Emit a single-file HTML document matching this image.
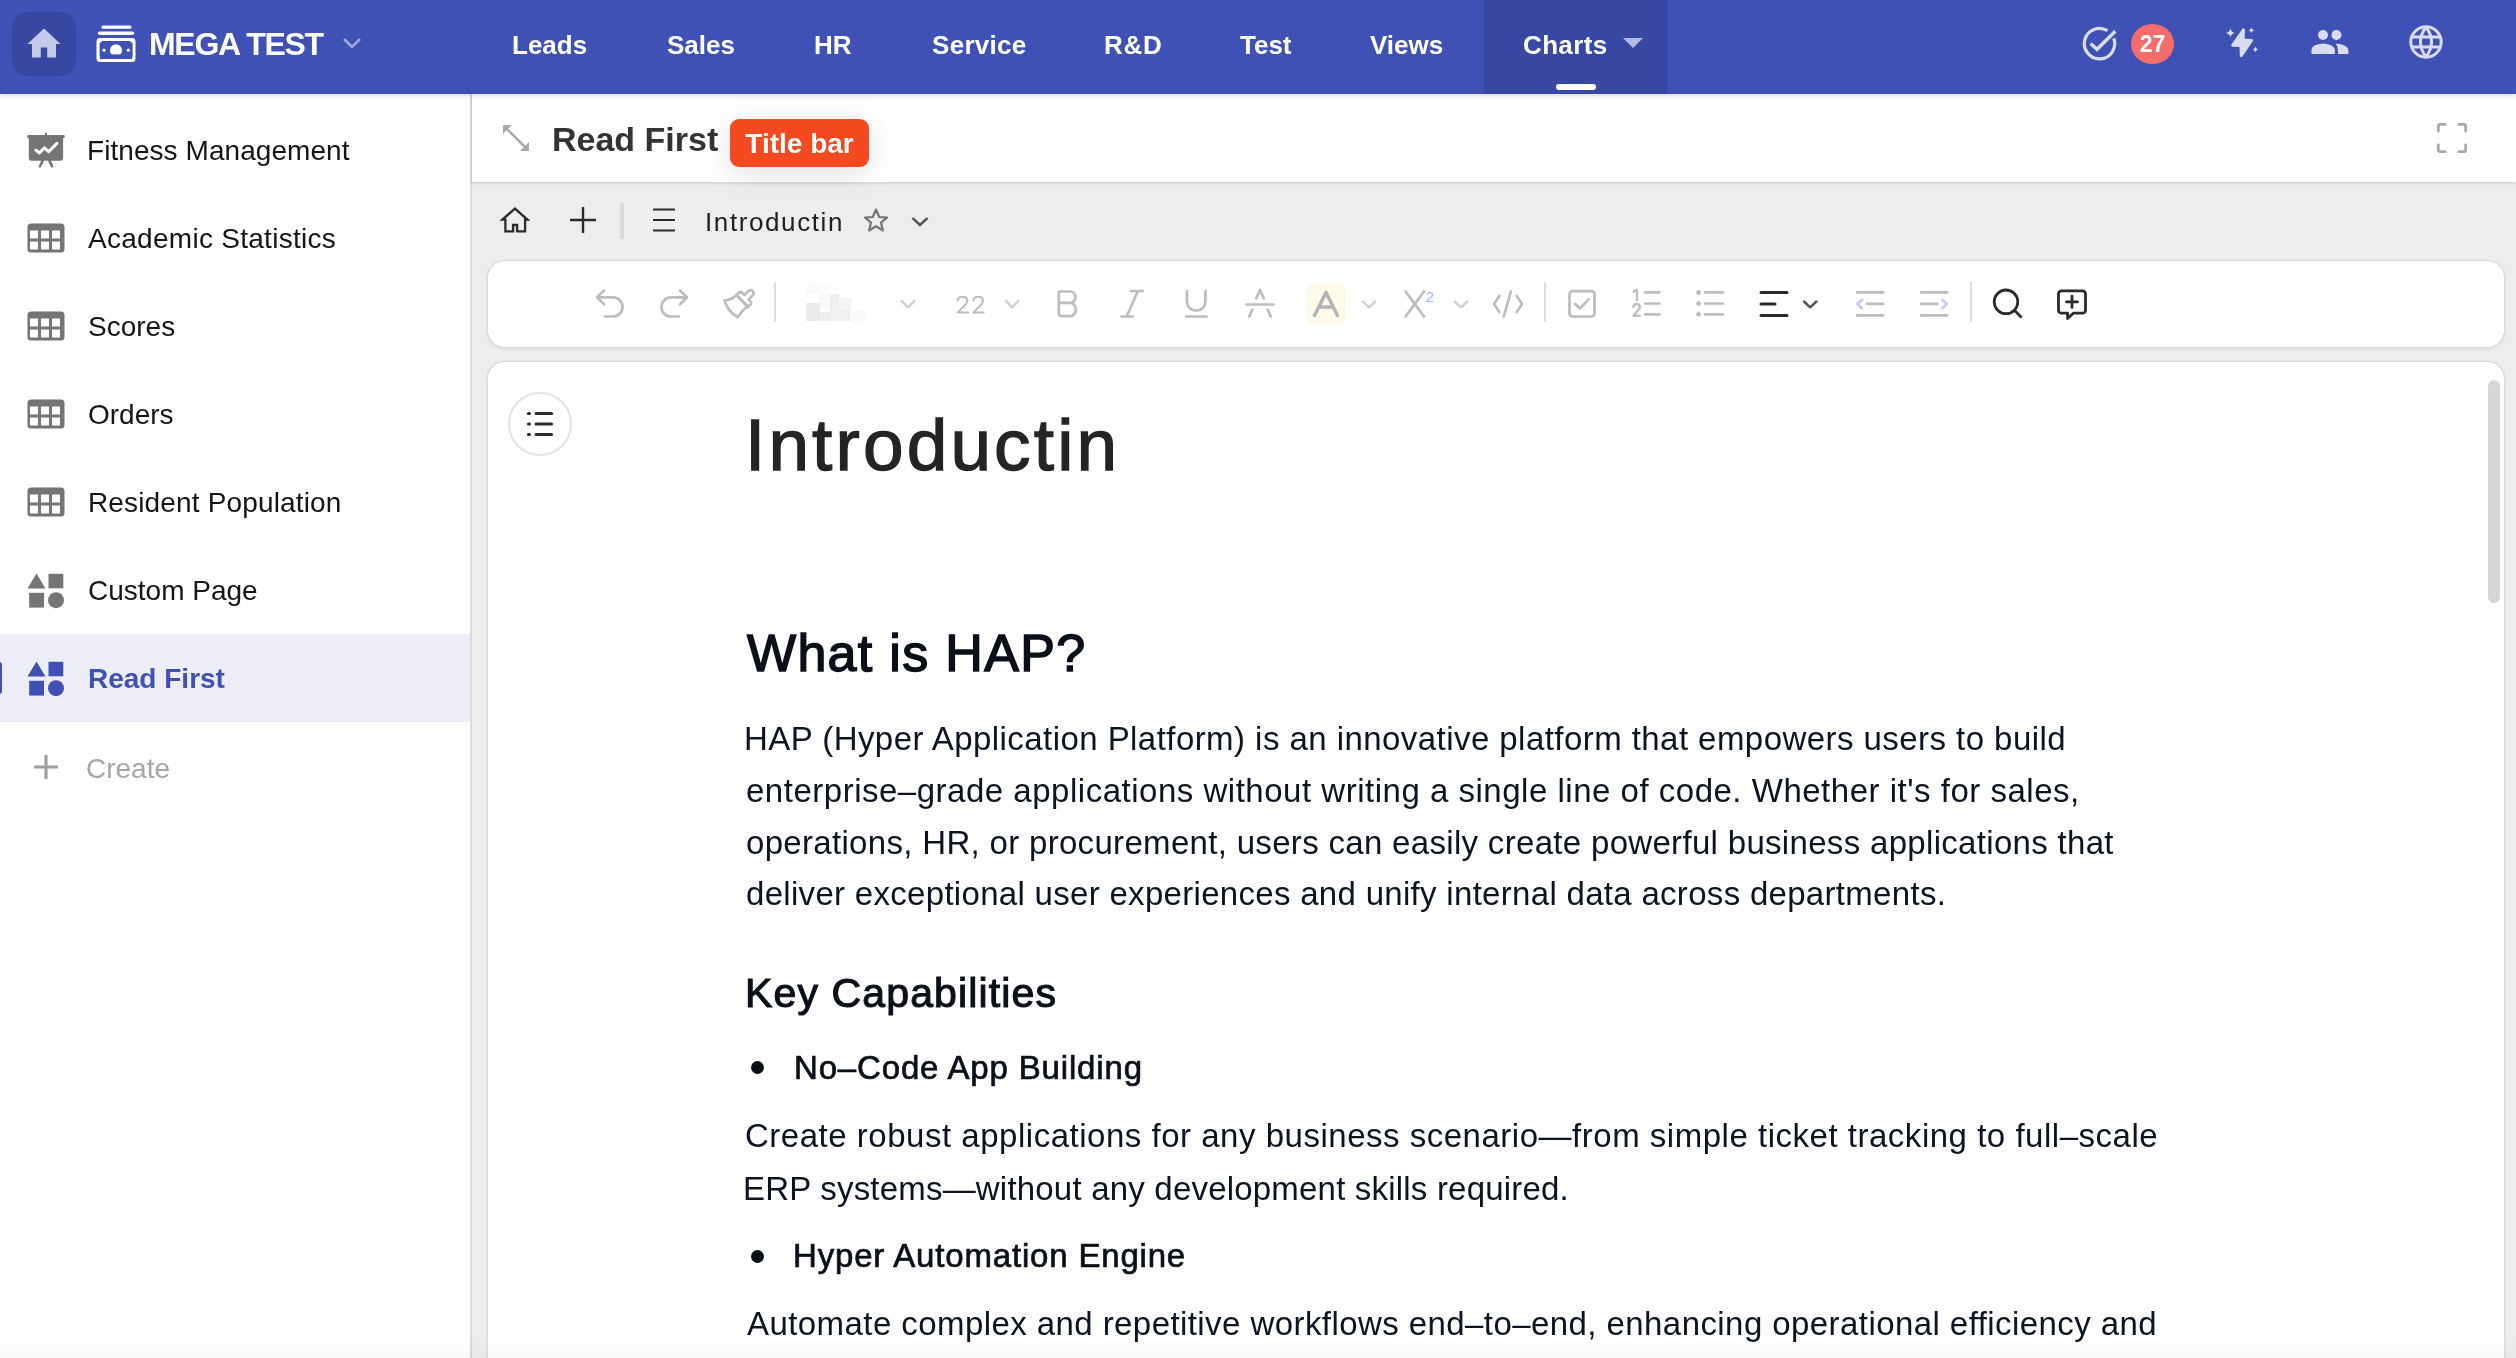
<!DOCTYPE html>
<html><head><meta charset="utf-8">
<style>
*{box-sizing:border-box;margin:0;padding:0}
html,body{width:2516px;height:1358px;overflow:hidden;background:#fff;font-family:"Liberation Sans",sans-serif}
.abs{position:absolute}
#hdr{position:absolute;left:0;top:0;width:2516px;height:94px;background:#3F51B5;z-index:5;box-shadow:0 1px 6px rgba(0,0,0,.2)}
.nav{will-change:transform;position:absolute;top:-2px;height:94px;color:#fff;font-weight:bold;font-size:26px;line-height:94px;white-space:nowrap}
#side{position:absolute;left:0;top:94px;width:470px;height:1264px;background:#fff}
#sideb{position:absolute;left:470px;top:94px;width:2px;height:1264px;background:#DCDCDC}
.si{position:absolute;left:0;width:470px;height:88px}
.si .t{will-change:transform;position:absolute;left:88px;top:1px;line-height:88px;font-size:28px;color:#151515;white-space:nowrap}
.si svg{position:absolute;left:26px;top:26px}
#main{position:absolute;left:472px;top:94px;width:2044px;height:1264px;background:#EDEDED}
#titlebar{position:absolute;left:472px;top:94px;width:2044px;height:88px;background:#fff;box-shadow:0 1px 3px rgba(0,0,0,.15);z-index:2}
#titlebar div,#row2 div,#hdr div{will-change:transform}
.ln{position:absolute;white-space:nowrap;-webkit-font-smoothing:antialiased;will-change:transform}
</style></head><body>
<div id="hdr">
  <div class="abs" style="left:12px;top:12px;width:64px;height:64px;border-radius:15px;background:rgba(0,0,0,.1)"></div>
  <svg class="abs" style="left:27px;top:28px" width="34" height="30" viewBox="0 0 34 30"><path d="M17 0.5 L33.5 16 L29 16 L29 29.5 L20.2 29.5 L20.2 19.5 L13.8 19.5 L13.8 29.5 L5 29.5 L5 16 L0.5 16 Z" fill="#C5CAE9"/></svg>
  <div class="abs" style="left:1484px;top:0;width:183px;height:94px;background:rgba(0,0,0,.1)"></div>

  <svg class="abs" style="left:96px;top:25px" width="40" height="38" viewBox="0 0 40 38">
    <rect x="5.5" y="0.5" width="30" height="3.3" rx="1.6" fill="#fff"/>
    <rect x="1.9" y="6.4" width="36.4" height="3.5" rx="1.7" fill="#fff"/>
    <path fill-rule="evenodd" fill="#fff" d="M4 13 H36 a3.5 3.5 0 0 1 3.5 3.5 V33.6 a3.5 3.5 0 0 1 -3.5 3.5 H4 a3.5 3.5 0 0 1 -3.5 -3.5 V16.5 a3.5 3.5 0 0 1 3.5 -3.5 Z M6.2 16 L3.6 18.4 V31.4 L6.2 34 H33.8 L36.6 31.4 V18.4 L33.8 16 Z"/>
    <circle cx="20" cy="25.2" r="6" fill="#fff"/>
    <rect x="4" y="29.4" width="32" height="4.6" fill="#3F51B5"/>
    <circle cx="8" cy="25.2" r="1.6" fill="#fff"/>
    <circle cx="32.3" cy="25.2" r="1.6" fill="#fff"/>
  </svg>
  <div class="nav" style="left:148.5px;top:-3px;font-size:32px;letter-spacing:-1.3px">MEGA TEST</div>
  <svg class="abs" style="left:342px;top:37px" width="20" height="13" viewBox="0 0 20 13"><path d="M2 2 L10 10 L18 2" fill="none" stroke="#9FA8DA" stroke-width="2.6"/></svg>
  <div class="nav" style="left:512px">Leads</div>
  <div class="nav" style="left:667px">Sales</div>
  <div class="nav" style="left:814px">HR</div>
  <div class="nav" style="left:931.5px;letter-spacing:0.3px">Service</div>
  <div class="nav" style="left:1103.5px;letter-spacing:0.7px">R&amp;D</div>
  <div class="nav" style="left:1240px">Test</div>
  <div class="nav" style="left:1370px">Views</div>
  <div class="nav" style="left:1523px;letter-spacing:0.35px">Charts</div>
  <svg class="abs" style="left:1622px;top:37px" width="22" height="12" viewBox="0 0 22 12"><path d="M1 1 H21 L11 11 Z" fill="#B3B9E0"/></svg>
  <div class="abs" style="left:1556px;top:84px;width:40px;height:6px;border-radius:3px;background:#fff"></div>
  <svg class="abs" style="left:2080px;top:25px" width="40" height="40" viewBox="0 0 40 40">
    <path d="M33.8 13.4 A15.2 15.2 0 1 1 27.5 5.7" fill="none" stroke="#D9DCF0" stroke-width="3.2"/>
    <path d="M10.6 18.6 L17 24.3 L35.3 6.2" fill="none" stroke="#D9DCF0" stroke-width="3.4"/>
  </svg>
  <div class="abs" style="left:2131px;top:24px;width:43px;height:40px;border-radius:50%;background:#F46D6D;color:#fff;font-weight:bold;font-size:23px;line-height:40px;text-align:center">27</div>
  <svg class="abs" style="left:2222px;top:24px" width="40" height="40" viewBox="0 0 40 40">
    <path d="M21.6 5.6 L10.6 21.4 L18.8 21.7 L19.3 31.8 L29.6 16.4 L21.2 15.8 Z" fill="#D9DCF0" stroke="#D9DCF0" stroke-width="2.8" stroke-linejoin="round"/>
    <path d="M8.4 4.2 Q8.964 8.336 13.100000000000001 8.9 Q8.964 9.464 8.4 13.600000000000001 Q7.836 9.464 3.7 8.9 Q7.836 8.336 8.4 4.2 Z" fill="#D9DCF0"/>
    <path d="M29.4 3.0 Q29.796 5.904 32.699999999999996 6.3 Q29.796 6.696 29.4 9.6 Q29.003999999999998 6.696 26.099999999999998 6.3 Q29.003999999999998 5.904 29.4 3.0 Z" fill="#D9DCF0"/>
    <path d="M33.4 22.2 Q33.796 25.104 36.699999999999996 25.5 Q33.796 25.896 33.4 28.8 Q33.004 25.896 30.099999999999998 25.5 Q33.004 25.104 33.4 22.2 Z" fill="#D9DCF0"/>
  </svg>
  <svg class="abs" style="left:2308px;top:26px" width="44" height="32" viewBox="0 0 44 32">
    <circle cx="15" cy="9" r="5" fill="#D9DCF0"/>
    <circle cx="28.5" cy="9" r="5" fill="#D9DCF0"/>
    <path d="M3.5 28 V24.5 Q3.5 18 15 17.5 Q26.5 18 26.9 24.5 V28 Z" fill="#D9DCF0"/>
    <path d="M30 28 V24.5 Q30 20 27.6 17.6 Q40 18.5 40.4 24.5 V28 Z" fill="#D9DCF0"/>
  </svg>
  <svg class="abs" style="left:2406px;top:22px" width="40" height="40" viewBox="0 0 40 40">
    <g fill="none" stroke="#D9DCF0" stroke-width="3">
      <circle cx="20" cy="20" r="15.2"/>
      <path d="M20 5 Q9 20 20 35 M20 5 Q31 20 20 35"/>
      <line x1="5" y1="15" x2="35" y2="15"/>
      <line x1="5" y1="25" x2="35" y2="25"/>
    </g>
  </svg>
</div>
<div id="side">
<div class="si" style="top:12px"><svg style="left:27px;top:20px" width="40" height="46" viewBox="0 0 40 46"><rect x="0.2" y="9.1" width="37.6" height="2.9" rx="1.3" fill="#757575"/><rect x="18" y="6.6" width="2" height="4" rx="0.8" fill="#757575"/><path d="M1.8 11 H36.1 V31.8 a3 3 0 0 1 -3 3 H4.8 a3 3 0 0 1 -3 -3 Z" fill="#757575"/><path d="M16 34 L13 40.3 M22.1 34 L25 40.3" stroke="#757575" stroke-width="2.6" stroke-linecap="round"/><path d="M8.9 24.2 L12.4 27 L17.5 21.9 L21.6 25.6 L30 17.4" fill="none" stroke="#fff" stroke-width="3" stroke-linecap="round" stroke-linejoin="round"/></svg><div class="t" style="left:87px;letter-spacing:0.06px">Fitness Management</div></div>
<div class="si" style="top:100px"><svg style="left:27px;top:29px" width="38" height="32" viewBox="0 0 38 32"><path fill-rule="evenodd" fill="#757575" d="M4 0.5 H34 a3.5 3.5 0 0 1 3.5 3.5 V26 a3.5 3.5 0 0 1 -3.5 3.5 H4 a3.5 3.5 0 0 1 -3.5 -3.5 V4 a3.5 3.5 0 0 1 3.5 -3.5 Z M3 7.5 V15.5 H11 V7.5 Z M14 7.5 V15.5 H22 V7.5 Z M25 7.5 V15.5 H33 V7.5 Z M3 18.5 V26.5 H11 V18.5 Z M14 18.5 V26.5 H22 V18.5 Z M25 18.5 V26.5 H33 V18.5 Z"/></svg><div class="t" style="letter-spacing:0.28px">Academic Statistics</div></div>
<div class="si" style="top:188px"><svg style="left:27px;top:29px" width="38" height="32" viewBox="0 0 38 32"><path fill-rule="evenodd" fill="#757575" d="M4 0.5 H34 a3.5 3.5 0 0 1 3.5 3.5 V26 a3.5 3.5 0 0 1 -3.5 3.5 H4 a3.5 3.5 0 0 1 -3.5 -3.5 V4 a3.5 3.5 0 0 1 3.5 -3.5 Z M3 7.5 V15.5 H11 V7.5 Z M14 7.5 V15.5 H22 V7.5 Z M25 7.5 V15.5 H33 V7.5 Z M3 18.5 V26.5 H11 V18.5 Z M14 18.5 V26.5 H22 V18.5 Z M25 18.5 V26.5 H33 V18.5 Z"/></svg><div class="t">Scores</div></div>
<div class="si" style="top:276px"><svg style="left:27px;top:29px" width="38" height="32" viewBox="0 0 38 32"><path fill-rule="evenodd" fill="#757575" d="M4 0.5 H34 a3.5 3.5 0 0 1 3.5 3.5 V26 a3.5 3.5 0 0 1 -3.5 3.5 H4 a3.5 3.5 0 0 1 -3.5 -3.5 V4 a3.5 3.5 0 0 1 3.5 -3.5 Z M3 7.5 V15.5 H11 V7.5 Z M14 7.5 V15.5 H22 V7.5 Z M25 7.5 V15.5 H33 V7.5 Z M3 18.5 V26.5 H11 V18.5 Z M14 18.5 V26.5 H22 V18.5 Z M25 18.5 V26.5 H33 V18.5 Z"/></svg><div class="t">Orders</div></div>
<div class="si" style="top:364px"><svg style="left:27px;top:29px" width="38" height="32" viewBox="0 0 38 32"><path fill-rule="evenodd" fill="#757575" d="M4 0.5 H34 a3.5 3.5 0 0 1 3.5 3.5 V26 a3.5 3.5 0 0 1 -3.5 3.5 H4 a3.5 3.5 0 0 1 -3.5 -3.5 V4 a3.5 3.5 0 0 1 3.5 -3.5 Z M3 7.5 V15.5 H11 V7.5 Z M14 7.5 V15.5 H22 V7.5 Z M25 7.5 V15.5 H33 V7.5 Z M3 18.5 V26.5 H11 V18.5 Z M14 18.5 V26.5 H22 V18.5 Z M25 18.5 V26.5 H33 V18.5 Z"/></svg><div class="t" style="letter-spacing:0.15px">Resident Population</div></div>
<div class="si" style="top:452px"><svg style="left:26px;top:27px" width="40" height="38" viewBox="0 0 40 38"><path d="M10.5 0.5 L19.5 15.5 H1.5 Z" fill="#757575"/><rect x="22.5" y="0.8" width="14.8" height="14.5" fill="#757575"/><rect x="3.2" y="19.8" width="14.8" height="14.8" fill="#757575"/><circle cx="30" cy="27.2" r="8" fill="#757575"/></svg><div class="t">Custom Page</div></div>
<div class="si" style="top:540px;background:#EDEDF8"><svg style="left:26px;top:27px" width="40" height="38" viewBox="0 0 40 38"><path d="M10.5 0.5 L19.5 15.5 H1.5 Z" fill="#3F51B5"/><rect x="22.5" y="0.8" width="14.8" height="14.5" fill="#3F51B5"/><rect x="3.2" y="19.8" width="14.8" height="14.8" fill="#3F51B5"/><circle cx="30" cy="27.2" r="8" fill="#3F51B5"/></svg><div class="t" style="color:#3F51B5;font-weight:bold">Read First</div></div>
<div class="abs" style="left:-6px;top:568px;width:8px;height:32px;border-radius:3px;background:#3F51B5;z-index:3"></div>
<div class="si" style="top:628px"><svg style="left:33px;top:32px" width="26" height="26" viewBox="0 0 26 26"><path d="M13 1 V25 M1 13 H25" stroke="#9E9E9E" stroke-width="3.1"/></svg><div class="t" style="left:86px;top:2.5px;color:#A6A6A6">Create</div></div>
</div>
<div id="sideb"></div>
<div id="main"></div>
<div id="titlebar">
  <svg class="abs" style="left:30px;top:30px" width="28" height="28" viewBox="0 0 28 28">
    <path d="M1 1 H10 L1 10 Z" fill="#ABABAB"/><path d="M27 27 H18 L27 18 Z" fill="#ABABAB"/>
    <path d="M4 4 L24 24" stroke="#ABABAB" stroke-width="2.6"/>
  </svg>
  <div class="abs" style="left:80px;top:1px;line-height:88px;font-size:34px;font-weight:bold;color:#333;white-space:nowrap">Read First</div>
  <div class="abs" style="left:258px;top:25px;width:139px;height:48px;border-radius:9px;background:#F44A22;color:#fff;font-size:28px;font-weight:bold;line-height:50px;text-align:center;box-shadow:0 6px 30px rgba(0,0,0,.13);white-space:nowrap">Title bar</div>
  <svg class="abs" style="left:1964px;top:28px" width="32" height="32" viewBox="0 0 32 32">
    <g fill="none" stroke="#A8A8A8" stroke-width="2.8" stroke-linecap="round" stroke-linejoin="round">
      <path d="M2.3 9.2 V4.3 a2 2 0 0 1 2 -2 H9.2"/><path d="M22.8 2.3 H27.7 a2 2 0 0 1 2 2 V9.2"/>
      <path d="M29.7 22.8 V27.7 a2 2 0 0 1 -2 2 H22.8"/><path d="M9.2 29.7 H4.3 a2 2 0 0 1 -2 -2 V22.8"/>
    </g>
  </svg>
</div>
<div id="row2">
  <svg class="abs" style="left:498px;top:205px" width="34" height="30" viewBox="0 0 34 30">
    <path d="M4.4 14.6 L16.9 3.6 L29.4 14.6 H27.1 V26.4 H19.1 V20 H15.1 V26.4 H7.4 V14.6 Z" fill="none" stroke="#2B2B2B" stroke-width="2.3" stroke-linejoin="miter"/>
  </svg>
  <svg class="abs" style="left:569px;top:206px" width="28" height="28" viewBox="0 0 28 28"><path d="M14 1 V27 M1 14 H27" stroke="#2B2B2B" stroke-width="2.4"/></svg>
  <div class="abs" style="left:620px;top:203px;width:4px;height:36px;background:#DADADA"></div>
  <svg class="abs" style="left:652px;top:208px" width="24" height="24" viewBox="0 0 24 24"><path d="M1 1.5 H23 M1 12 H23 M1 22.5 H23" stroke="#2B2B2B" stroke-width="2.2"/></svg>
  <div class="abs" style="left:704.5px;top:200.5px;line-height:42px;font-size:26px;color:#1E1E1E;white-space:nowrap;letter-spacing:1.6px">Introductin</div>
  <svg class="abs" style="left:862px;top:207px" width="28" height="28" viewBox="0 0 28 28"><path d="M14 2.5 L17.2 10 L25 10.6 L19 15.7 L20.9 23.5 L14 19.3 L7.1 23.5 L9 15.7 L3 10.6 L10.8 10 Z" fill="none" stroke="#757575" stroke-width="2.2" stroke-linejoin="round"/></svg>
  <svg class="abs" style="left:910px;top:215px" width="20" height="13" viewBox="0 0 20 13"><path d="M2.5 3 L10 10 L17.5 3" fill="none" stroke="#555" stroke-width="2.4"/></svg>
</div>
<div id="tbcard" class="abs" style="left:488px;top:261px;width:2016px;height:86px;background:#fff;border-radius:17px;box-shadow:0 0 0 1px #D8D8D8, 0 1px 4px rgba(0,0,0,.12)"></div>
<div id="doccard" class="abs" style="left:488px;top:362px;width:2016px;height:1050px;background:#fff;border-radius:17px;box-shadow:0 0 0 1px #D8D8D8, 0 1px 4px rgba(0,0,0,.12);overflow:hidden"></div>
<svg class="abs" style="left:0;top:0;z-index:4" width="2516" height="400" viewBox="0 0 2516 400">
 <g fill="none" stroke="#BDBDBD" stroke-width="2.7" stroke-linecap="round" stroke-linejoin="round">
  <!-- undo -->
  <path d="M604 290.5 L597 297.4 L604 304.2"/><path d="M597.5 297.4 H613 A9.55 9.55 0 0 1 613 316.5 H605"/>
  <!-- redo -->
  <path d="M680 290.5 L687 297.4 L680 304.2"/><path d="M686.5 297.4 H671 A9.55 9.55 0 0 0 671 316.5 H679"/>
  <!-- brush -->
  <path d="M724.5 300.5 Q732 300 736.5 295 L747.5 306 Q742 311 739 315.5 L737.5 317 Q728 312 724.5 300.5 Z"/>
  <path d="M736.5 295 L738.5 293 Q740.5 291 742.5 293 L744.5 295 L748.5 291 Q751 289 753 291.5 Q754.5 293.5 752.5 295.5 L748.5 299.5 L750.5 301.5 Q752 303.5 750 305 L747.5 307.5"/>
  <path d="M739 298 L745.5 304.5"/>
  <!-- B -->
  <path d="M1058.8 291.5 H1070.5 A5.7 5.7 0 0 1 1070.5 302.8 H1058.8 Z M1058.8 302.8 H1071.2 A7.2 7.2 0 0 1 1071.2 316.2 H1061.8 A3 3 0 0 1 1058.8 313.2 Z"/>
  <!-- I -->
  <path d="M1131 291 H1143 M1121.5 316.5 H1133 M1137.7 291.5 L1126.8 316"/>
  <!-- U -->
  <path d="M1187 291 V301.5 A9.2 9.2 0 0 0 1205.4 301.5 V291 M1186 316.5 H1206.5"/>
  <!-- strike -->
  <path d="M1256.3 298.3 L1260 290 L1263.7 298.3 M1246.5 304.5 H1273.5 M1252.3 309.5 L1249.3 316.5 M1267.7 309.5 L1270.7 316.5"/>
  <!-- X -->
  <path d="M1405.5 291.5 L1424 316.5 M1424 291.5 L1405.5 316.5"/>
  <!-- code -->
  <path d="M1499.3 296 L1494 304.1 L1499.3 312 M1510.8 291.5 L1503.8 316.5 M1516.8 296 L1522.2 304.1 L1516.8 312"/>
  <!-- checkbox -->
  <rect x="1569.5" y="291.2" width="25" height="25.3" rx="3"/>
  <path d="M1575.2 303.9 L1579.9 308.4 L1588.7 299.4"/>
  <!-- ordered list lines -->
  <path d="M1645 292.4 H1659.5 M1645 303.5 H1659.5 M1645 314.3 H1659.5"/>
  <!-- bullet list lines -->
  <path d="M1705 292.4 H1723 M1705 303.5 H1723 M1705 314.3 H1723"/>
  <!-- outdent -->
  <path d="M1857 292.4 H1883.2 M1867 303.9 H1883.2 M1857 315.4 H1883.2"/>
  <path d="M1921 292.4 H1947.2 M1921 303.9 H1937.3 M1921 315.4 H1947.2"/>
 </g>
 <g fill="none" stroke="#D0D0D0" stroke-width="2.4" stroke-linecap="round" stroke-linejoin="round">
  <path d="M901.5 300.8 L908 307.3 L914.5 300.8"/>
  <path d="M1006 300.8 L1012.2 307.3 L1018.4 300.8"/>
  <path d="M1362.8 301.5 L1369 307.3 L1375.2 301.5"/>
  <path d="M1454.6 301.5 L1461 307.3 L1467.4 301.5"/>
 </g>
 <path d="M957.8 300.4 Q958.0 296.7 962.6 296.7 Q967.4 296.7 967.4 300.6 Q967.4 302.8 964.9 305.3 L957.7 312.6 H968.0 M973.4 300.4 Q973.6 296.7 978.2 296.7 Q983.0 296.7 983.0 300.6 Q983.0 302.8 980.5 305.3 L973.3 312.6 H983.6" fill="none" stroke="#BDBDBD" stroke-width="2" stroke-linecap="round" stroke-linejoin="round"/>
 <text x="1425.5" y="302" font-family="Liberation Sans" font-size="15.5" fill="#A9B6FF">2</text>
 <g fill="#BDBDBD"></g><g fill="none" stroke="#BDBDBD" stroke-width="2.3" stroke-linecap="round" stroke-linejoin="round"><path d="M1633.6 291.8 L1637 289.6 V300.2"/><path d="M1633.4 307.2 Q1633.6 304 1636.6 304 Q1639.8 304 1639.8 307 Q1639.8 308.8 1638 310.6 L1633.4 315.8 H1640"/></g><g fill="#BDBDBD">
  <rect x="1696.3" y="290.2" width="4.4" height="4.4" rx="1.2" transform="rotate(45 1698.5 292.4)"/>
  <rect x="1696.3" y="301.3" width="4.4" height="4.4" rx="1.2" transform="rotate(45 1698.5 303.5)"/>
  <rect x="1696.3" y="312.1" width="4.4" height="4.4" rx="1.2" transform="rotate(45 1698.5 314.3)"/>
 </g>
 <!-- separators -->
 <g fill="#DCDCDC"><rect x="774" y="282.4" width="2" height="39.3"/><rect x="1544" y="282.2" width="2" height="39.4"/><rect x="1970" y="282" width="2" height="39.8"/></g>
 <!-- highlight A -->
 <rect x="1306" y="283.9" width="40" height="40" rx="7" fill="#FDFBE8"/>
 <path d="M1314.5 315.5 L1326 292.5 L1337.5 315.5 M1319 307 H1333" fill="none" stroke="#B3B3BA" stroke-width="3.4" stroke-linecap="round" stroke-linejoin="round"/>
 <!-- blue chevrons outdent/indent -->
 <path d="M1862 299.8 L1857.2 303.9 L1862 308.2 M1942.3 299.8 L1947.1 303.9 L1942.3 308.2" fill="none" stroke="#C4CCFF" stroke-width="2.6" stroke-linecap="round" stroke-linejoin="round"/>
 <!-- align (dark) -->
 <path d="M1761 292.4 H1787 M1761 303.9 H1775 M1761 315.4 H1787" fill="none" stroke="#2B2B2B" stroke-width="3" stroke-linecap="round"/>
 <path d="M1804 301.5 L1810.2 307.3 L1816.4 301.5" fill="none" stroke="#555" stroke-width="2.5" stroke-linecap="round" stroke-linejoin="round"/>
 <!-- search -->
 <g fill="none" stroke="#2B2B2B" stroke-width="2.8" stroke-linecap="round" stroke-linejoin="round">
  <circle cx="2006" cy="301.8" r="11.8"/><path d="M2014.6 310.6 L2020.8 316.8"/>
  <path d="M2061.5 290.8 H2082.5 A3 3 0 0 1 2085.5 293.8 V310.2 A3 3 0 0 1 2082.5 313.2 H2073.3 L2067.6 318.6 V313.2 H2061.5 A3 3 0 0 1 2058.5 310.2 V293.8 A3 3 0 0 1 2061.5 290.8 Z"/>
  <path d="M2072 296.2 V307.4 M2066.4 301.8 H2077.6"/>
 </g>
 <!-- blurred font placeholder -->
 <g>
  <rect x="806" y="284" width="12" height="10" fill="#FAFAFA"/><rect x="818" y="284" width="12" height="10" fill="#FCFCFC"/>
  <rect x="818" y="294" width="12" height="15" fill="#F8F8F8"/><rect x="830" y="294" width="9" height="16" fill="#EFEFEF"/><rect x="839" y="298" width="13" height="12" fill="#F5F5F5"/>
  <rect x="806" y="303" width="14" height="18" fill="#EBEBEB"/><rect x="820" y="312" width="10" height="9" fill="#EEEEEE"/><rect x="830" y="310" width="20" height="11" fill="#F0F0F0"/><rect x="850" y="310" width="16" height="11" fill="#FAFAFA"/>
  <rect x="830" y="284" width="36" height="10" fill="#FDFDFD"/>
 </g>
</svg>
<div class="abs" style="left:751px;top:1060.5px;width:13px;height:13px;border-radius:50%;background:#0B1018"></div>
<div class="abs" style="left:751px;top:1249.5px;width:13px;height:13px;border-radius:50%;background:#0B1018"></div>
<div class="abs" style="left:508px;top:392px;width:64px;height:64px;border-radius:50%;border:2px solid #E3E3E3;background:#fff"></div>
<svg class="abs" style="left:524px;top:409px" width="32" height="30" viewBox="0 0 32 30">
  <g stroke="#2B2B2B" stroke-width="3" stroke-linecap="round"><path d="M4.4 4.5 H5.5 M4.4 15 H5.5 M4.4 25.5 H5.5"/><path d="M12 4.5 H27.6 M12 15 H27.6 M12 25.5 H27.6"/></g>
</svg>
<div class="abs" style="left:2488px;top:380px;width:12px;height:223px;border-radius:6px;background:#D6D6D6"></div>
<!--CONTENT-->
<div class="ln" style="left:745.20px;top:399.17px;font-size:73px;line-height:91px;font-weight:normal;color:#242424;letter-spacing:3.120px;-webkit-text-stroke:1.3px #242424;">Introductin</div>
<div class="ln" style="left:747.20px;top:621.11px;font-size:52px;line-height:65px;font-weight:normal;color:#0B1018;letter-spacing:1.309px;-webkit-text-stroke:1.5px #0B1018;">What is HAP?</div>
<div class="ln" style="left:744.00px;top:717.99px;font-size:33px;line-height:41px;font-weight:normal;color:#0B1420;letter-spacing:0.445px;">HAP (Hyper Application Platform) is an innovative platform that empowers users to build</div>
<div class="ln" style="left:746.00px;top:769.69px;font-size:33px;line-height:41px;font-weight:normal;color:#0B1420;letter-spacing:0.512px;">enterprise–grade applications without writing a single line of code. Whether it's for sales,</div>
<div class="ln" style="left:746.00px;top:821.69px;font-size:33px;line-height:41px;font-weight:normal;color:#0B1420;letter-spacing:0.317px;">operations, HR, or procurement, users can easily create powerful business applications that</div>
<div class="ln" style="left:746.00px;top:872.99px;font-size:33px;line-height:41px;font-weight:normal;color:#0B1420;letter-spacing:0.304px;">deliver exceptional user experiences and unify internal data across departments.</div>
<div class="ln" style="left:745.40px;top:967.65px;font-size:41px;line-height:51px;font-weight:normal;color:#0B1018;letter-spacing:1.127px;-webkit-text-stroke:1.1px #0B1018;">Key Capabilities</div>
<div class="ln" style="left:794.00px;top:1046.79px;font-size:33px;line-height:41px;font-weight:normal;color:#0B1018;letter-spacing:0.837px;-webkit-text-stroke:0.7px #0B1018;">No–Code App Building</div>
<div class="ln" style="left:745.00px;top:1115.09px;font-size:33px;line-height:41px;font-weight:normal;color:#0B1420;letter-spacing:0.516px;">Create robust applications for any business scenario—from simple ticket tracking to full–scale</div>
<div class="ln" style="left:743.40px;top:1167.79px;font-size:33px;line-height:41px;font-weight:normal;color:#0B1420;letter-spacing:0.200px;">ERP systems—without any development skills required.</div>
<div class="ln" style="left:793.00px;top:1234.69px;font-size:33px;line-height:41px;font-weight:normal;color:#0B1018;letter-spacing:0.818px;-webkit-text-stroke:0.7px #0B1018;">Hyper Automation Engine</div>
<div class="ln" style="left:747.00px;top:1302.89px;font-size:33px;line-height:41px;font-weight:normal;color:#0B1420;letter-spacing:0.427px;">Automate complex and repetitive workflows end–to–end, enhancing operational efficiency and</div>
<!--/CONTENT-->
<div class="abs" style="left:0;top:1340px;width:2516px;height:18px;background:linear-gradient(rgba(0,0,0,0),rgba(0,0,0,0.022));z-index:10"></div>
</body></html>
